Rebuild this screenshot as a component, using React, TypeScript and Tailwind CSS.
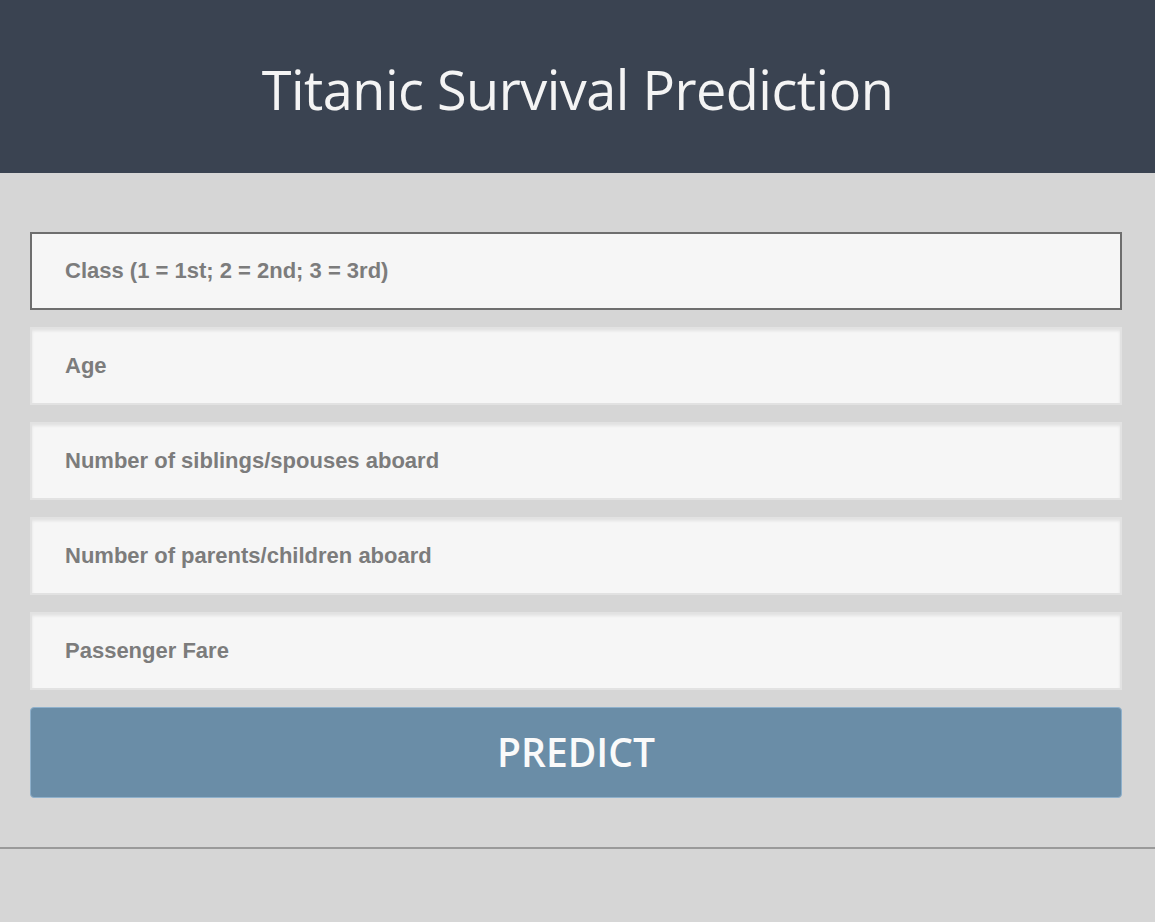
const fields = [
  "Class (1 = 1st; 2 = 2nd; 3 = 3rd)",
  "Age",
  "Number of siblings/spouses aboard",
  "Number of parents/children aboard",
  "Passenger Fare",
];

export default function App() {
  return (
    <div className="min-h-[922px] w-full bg-[#d6d6d6] flex flex-col">
      <header className="h-[173px] bg-[#3a4351] flex items-center justify-center">
        <h1 className="text-[54px] text-[#f4f4f4] font-['Open_Sans',sans-serif] tracking-[-0.5px] leading-none pt-1">
          Titanic Survival Prediction
        </h1>
      </header>

      <form className="flex flex-col gap-[17px] pl-[30px] pr-[33px] pt-[59px] pb-[49px] border-b-2 border-[#9a9a9a]">
        {fields.map((label, i) => (
          <input
            key={label}
            type="text"
            placeholder={label}
            className={
              i === 0
                ? "h-[78px] w-full bg-[#f6f6f6] border-2 border-[#6e6e6e] px-[33px] text-[22px] font-bold font-['Liberation_Sans',Arial,sans-serif] placeholder:text-[#7c7c7c] outline-none"
                : "h-[78px] w-full bg-[#f6f6f6] border-2 border-[#e2e2e2] shadow-[inset_0_2px_3px_rgba(0,0,0,0.08)] px-[33px] text-[22px] font-bold font-['Liberation_Sans',Arial,sans-serif] placeholder:text-[#7c7c7c] outline-none"
            }
          />
        ))}
        <button
          type="button"
          className="h-[91px] w-full bg-[#6a8da7] border border-[#8fb1cc] rounded-[4px] text-[#fafafa] text-[39px] font-semibold font-['Open_Sans',sans-serif]"
        >
          PREDICT
        </button>
      </form>
    </div>
  );
}
